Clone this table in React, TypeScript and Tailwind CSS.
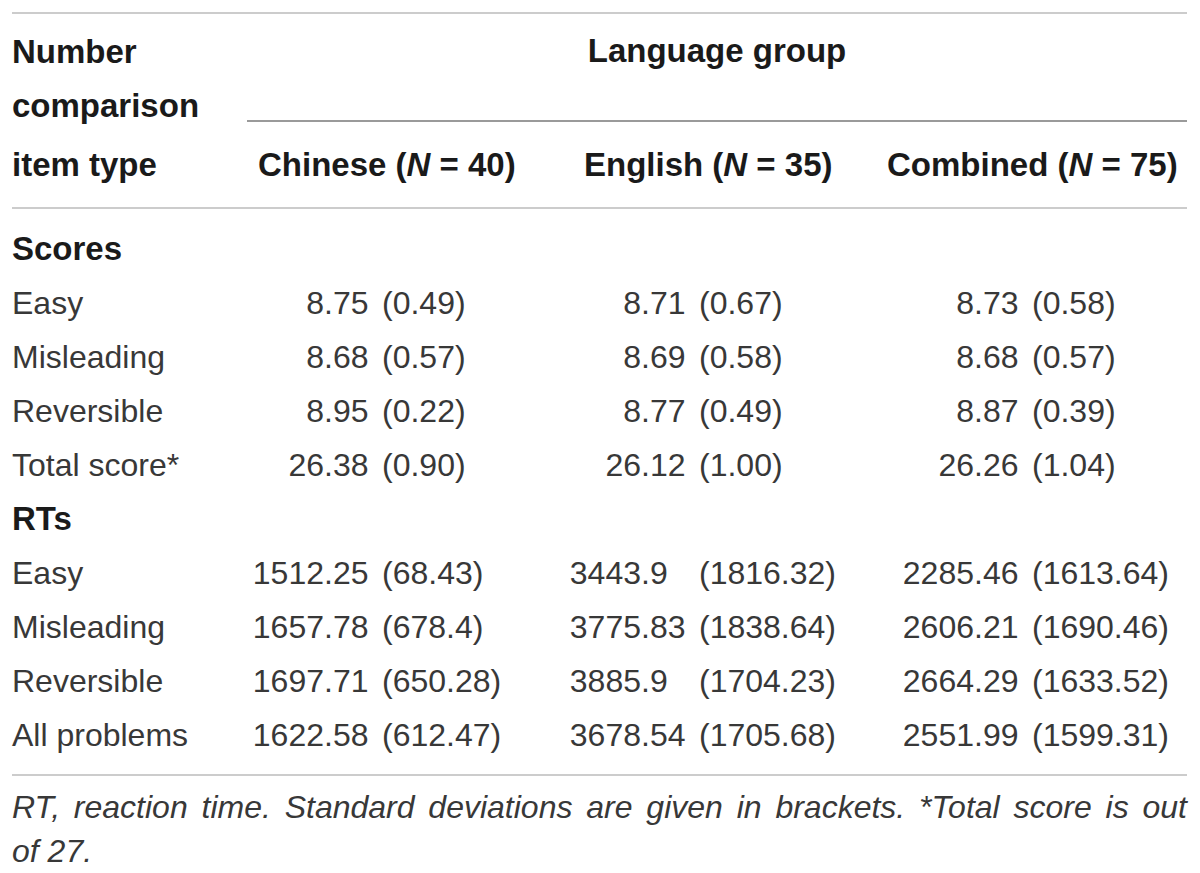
const rows = {
  scores: [
    { label: "Easy", cells: [["8", ".75", "(0.49)"], ["8", ".71", "(0.67)"], ["8", ".73", "(0.58)"]] },
    { label: "Misleading", cells: [["8", ".68", "(0.57)"], ["8", ".69", "(0.58)"], ["8", ".68", "(0.57)"]] },
    { label: "Reversible", cells: [["8", ".95", "(0.22)"], ["8", ".77", "(0.49)"], ["8", ".87", "(0.39)"]] },
    { label: "Total score*", cells: [["26", ".38", "(0.90)"], ["26", ".12", "(1.00)"], ["26", ".26", "(1.04)"]] },
  ],
  rts: [
    { label: "Easy", cells: [["1512", ".25", "(68.43)"], ["3443", ".9", "(1816.32)"], ["2285", ".46", "(1613.64)"]] },
    { label: "Misleading", cells: [["1657", ".78", "(678.4)"], ["3775", ".83", "(1838.64)"], ["2606", ".21", "(1690.46)"]] },
    { label: "Reversible", cells: [["1697", ".71", "(650.28)"], ["3885", ".9", "(1704.23)"], ["2664", ".29", "(1633.52)"]] },
    { label: "All problems", cells: [["1622", ".58", "(612.47)"], ["3678", ".54", "(1705.68)"], ["2551", ".99", "(1599.31)"]] },
  ],
}

// decimal-aligned value: integer part right-aligned, fraction, then SD at a fixed x
const Value = ({ cell, col }: { cell: string[]; col: number }) => {
  const intW = ["w-[77px]", "w-[91px]", "w-[104px]"][col]
  const outer = ["w-[303px]", "w-[320px]", "w-[317px]"][col]
  return (
    <div className={`${outer} flex`}>
      <span className={`${intW} text-right`}>{cell[0]}</span>
      <span className="w-[58px]">{cell[1]}</span>
      <span>{cell[2]}</span>
    </div>
  )
}

const Row = ({ label, cells }: { label: string; cells: string[][] }) => (
  <div className="flex h-[54px] items-center">
    <div className="w-[235px]">{label}</div>
    {cells.map((c, i) => (
      <Value key={i} cell={c} col={i} />
    ))}
  </div>
)

const Section = ({ title }: { title: string }) => (
  <div className="flex h-[54px] items-center font-bold text-[#1a1a1a] text-[33px]">{title}</div>
)

export default function App() {
  return (
    <div
      className="w-[1200px] h-[873px] bg-white px-[12px] pt-[12px] text-[32px] text-[#383838]"
      style={{ fontFamily: '"Liberation Sans", Arial, sans-serif' }}
    >
      <div className="w-[1175px]">
        <div className="h-[2px] bg-[#cccccc]" />
        {/* header */}
        <div className="flex h-[193px] font-bold text-[33px] text-[#1a1a1a]">
          <div className="w-[235px] pt-[11px] leading-[54px]">
            <div>Number</div>
            <div>comparison</div>
            <div className="mt-[5px]">item type</div>
          </div>
          <div className="flex-1 flex flex-col">
            <div className="h-[106px] pt-[20px] leading-[34px] text-center">Language group</div>
            <div className="h-[2px] bg-[#9a9a9a]" />
            <div className="flex h-[85px] items-center">
              <div className="w-[303px] pl-[11px] whitespace-nowrap">
                Chinese (<i>N</i> = 40)
              </div>
              <div className="w-[320px] pl-[34px] whitespace-nowrap">
                English (<i>N</i> = 35)
              </div>
              <div className="w-[317px] pl-[17px] whitespace-nowrap">
                Combined (<i>N</i> = 75)
              </div>
            </div>
          </div>
        </div>
        <div className="h-[2px] bg-[#cccccc]" />
        {/* body */}
        <div className="pt-[13px] pb-[12px] whitespace-nowrap">
          <Section title="Scores" />
          {rows.scores.map((r) => (
            <Row key={"s" + r.label} label={r.label} cells={r.cells} />
          ))}
          <Section title="RTs" />
          {rows.rts.map((r) => (
            <Row key={"r" + r.label} label={r.label} cells={r.cells} />
          ))}
        </div>
        <div className="h-[2px] bg-[#cccccc]" />
        <p className="pt-[9px] italic text-justify leading-[44px] text-[32px] text-[#383838]">
          RT, reaction time. Standard deviations are given in brackets. *Total score is out of{"\u00a0"}27.
        </p>
      </div>
    </div>
  )
}
